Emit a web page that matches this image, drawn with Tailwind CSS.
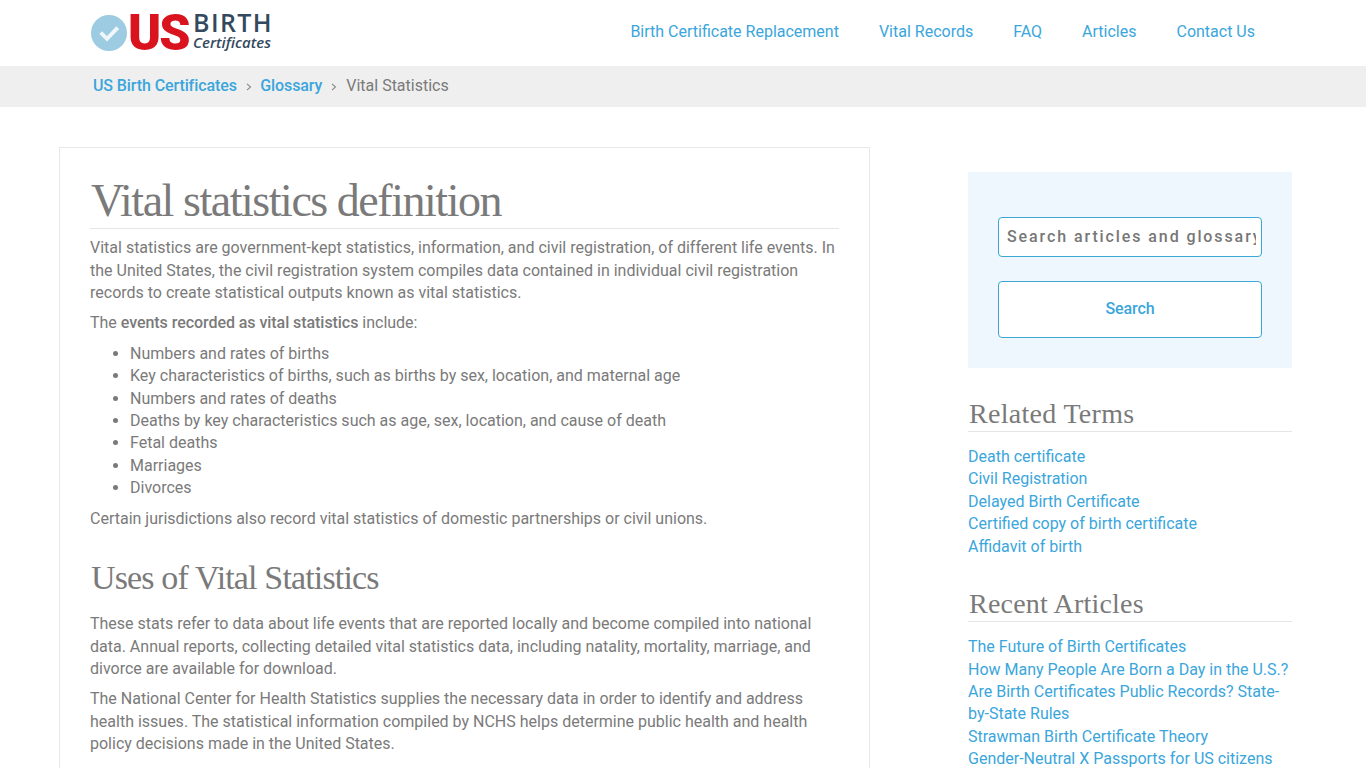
<!DOCTYPE html>
<html lang="en">
<head>
    <meta charset="UTF-8">
    <meta name="viewport" content="width=device-width, initial-scale=1.0">
    <title>Vital Statistics</title>
    <script src="https://cdn.jsdelivr.net/npm/@tailwindcss/browser@4"></script>
</head>
<body class="bg-white h-[768px] overflow-hidden font-['Roboto',sans-serif] text-[16px] leading-[22.4px] text-[#7a7a7a]">

    <!-- Header -->
    <header class="h-[66px] pl-[91px] pr-[111px] flex items-center justify-between">
        <a href="#" class="flex items-center">
            <svg width="36" height="36" viewBox="0 0 37 37">
                <circle cx="18.5" cy="18.5" r="18.5" fill="#9ccbe2"/>
                <path d="M10 18l6.5 6.5L27.5 13" fill="none" stroke="#fff" stroke-width="4" opacity="0.85"/>
            </svg>
            <span class="ml-[1px] w-[65px] font-black text-[#d9141f] text-[50px] leading-[40px] tracking-[-2px] mt-[-1px]">US</span>
            <span class="flex flex-col font-['Open_Sans',sans-serif] text-[#34495e] mt-[-5px]">
                <span class="text-[25px] leading-[23px] font-semibold tracking-[1.4px]">BIRTH</span>
                <span class="text-[15px] leading-[16px] font-semibold italic">Certificates</span>
            </span>
        </a>
        <nav class="flex gap-[40px] text-[#3aa6dc] mt-[-2px]">
            <a href="#">Birth Certificate Replacement</a>
            <a href="#">Vital Records</a>
            <a href="#">FAQ</a>
            <a href="#">Articles</a>
            <a href="#">Contact Us</a>
        </nav>
    </header>

    <!-- Breadcrumb -->
    <div class="h-[41px] bg-[#efefef] pl-[93px] flex items-center">
        <a href="#" class="text-[#3aa6dc] font-medium tracking-[-0.1px]">US Birth Certificates</a>
        <span class="w-[23.5px] flex justify-center">
            <svg width="6" height="8" viewBox="0 0 6 8"><path d="M1 .8L4.5 4 1 7.2" fill="none" stroke="#888" stroke-width="1.1"/></svg>
        </span>
        <a href="#" class="text-[#3aa6dc] font-medium tracking-[-0.1px]">Glossary</a>
        <span class="w-[24px] flex justify-center">
            <svg width="6" height="8" viewBox="0 0 6 8"><path d="M1 .8L4.5 4 1 7.2" fill="none" stroke="#888" stroke-width="1.1"/></svg>
        </span>
        <span>Vital Statistics</span>
    </div>

    <div class="flex pl-[59px] pt-[40px]">
        <!-- Main article -->
        <main class="w-[811px] shrink-0 border border-[#e8e8e8] px-[30px] pt-[25px] pb-[30px]">
            <h1 class="font-['Liberation_Serif',serif] text-[46px] leading-[55px] border-b border-[#e5e5e5] pl-[1px] tracking-[-1.46px]">Vital statistics definition</h1>
            <p class="mt-[8.1px]">Vital statistics are government-kept statistics, information, and civil registration, of different life events. In the United States, the civil registration system compiles data contained in individual civil registration records to create statistical outputs known as vital statistics.</p>
            <p class="mt-[8px]">The <strong class="font-medium tracking-[-0.06px]">events recorded as vital statistics</strong> include:</p>
            <ul class="list-disc pl-[40px] mt-[8px]">
                <li>Numbers and rates of births</li>
                <li>Key characteristics of births, such as births by sex, location, and maternal age</li>
                <li>Numbers and rates of deaths</li>
                <li>Deaths by key characteristics such as age, sex, location, and cause of death</li>
                <li>Fetal deaths</li>
                <li>Marriages</li>
                <li>Divorces</li>
            </ul>
            <p class="mt-[8px]">Certain jurisdictions also record vital statistics of domestic partnerships or civil unions.</p>
            <h2 class="font-['Liberation_Serif',serif] text-[34px] leading-[44px] mt-[26px] pl-[1px] tracking-[-0.85px]">Uses of Vital Statistics</h2>
            <p class="mt-[13.25px]">These stats refer to data about life events that are reported locally and become compiled into national data. Annual reports, collecting detailed vital statistics data, including natality, mortality, marriage, and divorce are available for download.</p>
            <p class="mt-[8px]">The National Center for Health Statistics supplies the necessary data in order to identify and address health issues. The statistical information compiled by NCHS helps determine public health and health policy decisions made in the United States.</p>
        </main>

        <!-- Sidebar -->
        <aside class="w-[324px] ml-[98px] shrink-0 pt-[25px]">
            <div class="bg-[#eff7fe] h-[196px] px-[30px] pt-[45px]">
                <input type="text" placeholder="Search articles and glossary" class="w-full h-[40px] bg-white border border-[#3ba7d2] rounded-[4px] pl-[8px] pr-[5px] pb-[2px] text-[16px] font-medium tracking-[1.9px] placeholder:text-[#777] outline-none">
                <button class="w-full h-[57px] mt-[24px] bg-white border border-[#3ba7d2] rounded-[4px] text-[#3aa6dc] font-medium tracking-[-0.1px]">Search</button>
            </div>
            <h3 class="font-['Liberation_Serif',serif] text-[28px] leading-[34px] mt-[29px] border-b border-[#e5e5e5] pl-[1px] tracking-[0.3px]">Related Terms</h3>
            <ul class="text-[#3aa6dc] mt-[14px]">
                <li><a href="#">Death certificate</a></li>
                <li><a href="#">Civil Registration</a></li>
                <li><a href="#">Delayed Birth Certificate</a></li>
                <li><a href="#">Certified copy of birth certificate</a></li>
                <li><a href="#">Affidavit of birth</a></li>
            </ul>
            <h3 class="font-['Liberation_Serif',serif] text-[28px] leading-[34px] mt-[29px] border-b border-[#e5e5e5] pl-[1px] tracking-[0.2px]">Recent Articles</h3>
            <ul class="text-[#3aa6dc] mt-[14.2px]">
                <li><a href="#">The Future of Birth Certificates</a></li>
                <li><a href="#">How Many People Are Born a Day in the U.S.?</a></li>
                <li><a href="#">Are Birth Certificates Public Records? State-by-State Rules</a></li>
                <li><a href="#">Strawman Birth Certificate Theory</a></li>
                <li><a href="#">Gender-Neutral X Passports for US citizens</a></li>
            </ul>
        </aside>
    </div>

</body>
</html>
